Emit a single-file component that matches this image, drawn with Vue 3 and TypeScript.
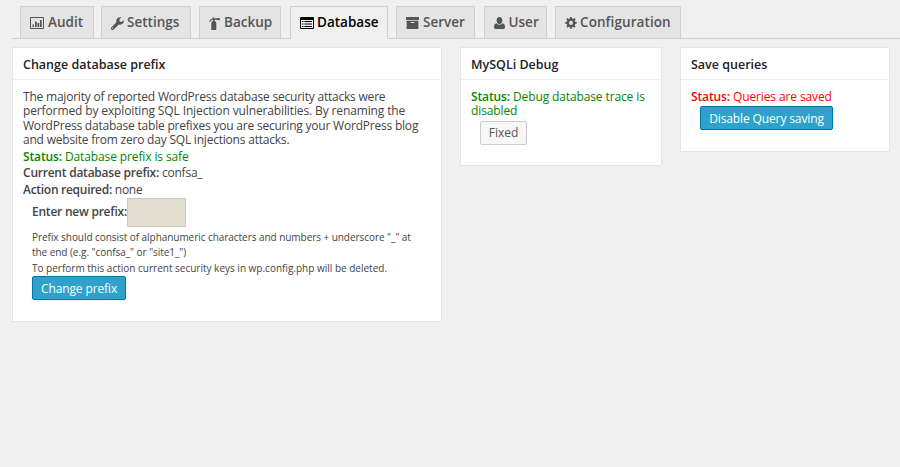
<script setup lang="ts">
interface Tab {
  id: string
  label: string
  box: string
  active?: boolean
}

const tabs: Tab[] = [
  { id: 'audit', label: 'Audit', box: '0 0 28 24' },
  { id: 'settings', label: 'Settings', box: '0.5 0.5 15 15' },
  { id: 'backup', label: 'Backup', box: '0 0 11 13' },
  { id: 'database', label: 'Database', box: '0 0 28 24', active: true },
  { id: 'server', label: 'Server', box: '0.5 1.5 15 13.5' },
  { id: 'user', label: 'User', box: '1 1.2 14 13.8' },
  { id: 'configuration', label: 'Configuration', box: '0 1 16 15.5' },
]
</script>

<template>
  <main class="page">
    <nav class="tabs">
      <a v-for="tab in tabs" :key="tab.id" class="tab" :class="[tab.id, { active: tab.active }]">
        <svg class="icon" :viewBox="tab.box" preserveAspectRatio="none" fill="currentColor">
          <template v-if="tab.id === 'audit'">
            <path fill-rule="evenodd" d="M2 0h24q2 0 2 2v20q0 2-2 2H2q-2 0-2-2V2Q0 0 2 0zm0 2v20h24V2z" />
            <path d="M5 15h3v5H5zM10 9h3.500v11H10zM15 12h3.500v8H15zM20 6h3.500v14H20z" />
          </template>
          <path v-else-if="tab.id === 'settings'" fill-rule="evenodd" d="M15.200 4.200 12.600 6.200 10.300 5.300V2.800L12.700 1C9.600.2 6.400 2 6.500 5.500L6.800 6.600 1 12.200c-.9.900-.9 1.900-.1 2.700s1.900.8 2.700-.1L9.400 9.200c3.700 1 6.500-1.500 5.800-5zM2.500 12.700a.7.700 0 1 1 0 1.400.7.700 0 0 1 0-1.400z" />
          <path v-else-if="tab.id === 'backup'" d="M3.500.8Q4.300-.2 5.300.8L5.600 1.600 10.800.9V3.300L5.600 2.700V3.800Q7.300 4.600 7.300 6.600V13H2.300V6.600Q2.300 4.600 4.200 3.800V2.700Q1.900 2.800 1 4.900L.1 4.500Q1.100 1.900 3.500 1.700z" />
          <path v-else-if="tab.id === 'database'" fill-rule="evenodd" d="M2 0h24q2 0 2 2v20q0 2-2 2H2q-2 0-2-2V2Q0 0 2 0zm0 6v16h24V6zM4 8h3v2H4zm5 0h15v2H9zM4 13h3v2H4zm5 0h15v2H9zM4 18h3v2H4zm5 0h15v2H9z" />
          <path v-else-if="tab.id === 'server'" fill-rule="evenodd" d="M.5 1.500h15v3.300H.5zM1.200 5.700h13.600V15H1.200zM6 7v1.200h4V7z" />
          <path v-else-if="tab.id === 'user'" d="M8 1.200c2.300 0 3.700 1.600 3.700 3.800 0 2.400-1.500 4.500-3.700 4.500S4.300 7.400 4.300 5c0-2.200 1.400-3.800 3.700-3.800zM4.200 8.400Q8 12 11.800 8.400C14.200 8.700 15 10.500 15 13q0 2-2 2H3q-2 0-2-2c0-2.500.8-4.300 3.200-4.600z" />
          <path v-else fill-rule="evenodd" d="M6.900 1h2.200l.4 2 1.400.6 1.700-1.200 1.600 1.600L13 5.700l.6 1.400 2 .4v2.200l-2 .4-.6 1.400 1.200 1.700-1.600 1.600-1.700-1.200-1.400.6-.4 2H6.900l-.4-2-1.400-.6-1.700 1.200-1.600-1.600L3 11.500l-.6-1.400-2-.4V7.500l2-.4L3 5.700 1.800 4l1.600-1.600 1.700 1.200L6.500 3zM8 6a2.600 2.600 0 1 0 0 5.200A2.600 2.600 0 0 0 8 6z" />
        </svg>
        <span>{{ tab.label }}</span>
      </a>
    </nav>

    <div class="cards">
      <section class="card prefix-card">
        <h2>Change database prefix</h2>
        <div class="body">
          <p class="intro">
            The majority of reported WordPress database security attacks were<br />
            <span class="wider">performed by exploiting SQL Injection vulnerabilities. By renaming the</span><br />
            WordPress database table prefixes you are securing your WordPress blog<br />
            and website from zero day SQL injections attacks.
          </p>
          <p class="row ok"><b>Status:</b> Database prefix is safe</p>
          <p class="row"><b>Current database prefix:</b> confsa_</p>
          <p class="row action"><b>Action required:</b> none</p>
          <form class="form" @submit.prevent>
            <label class="field"><b>Enter new prefix:</b><input type="text" /></label>
            <p class="hint">
              Prefix should consist of alphanumeric characters and numbers + underscore "_" at<br />
              the end (e.g. "confsa_" or "site1_")
            </p>
            <p class="hint note">To perform this action current security keys in wp.config.php will be deleted.</p>
            <button class="btn primary change">Change prefix</button>
          </form>
        </div>
      </section>

      <section class="card debug-card">
        <h2>MySQLi Debug</h2>
        <div class="body">
          <p class="ok"><b>Status:</b> Debug database trace is<br />disabled</p>
          <button class="btn fixed">Fixed</button>
        </div>
      </section>

      <section class="card queries-card">
        <h2>Save queries</h2>
        <div class="body">
          <p class="bad"><b>Status:</b> Queries are saved</p>
          <button class="btn primary disable">Disable Query saving</button>
        </div>
      </section>
    </div>
  </main>
</template>

<style>
body {
  background: #f0f0f0;
}
</style>

<style scoped>
.page {
  box-sizing: border-box;
  height: 467px;
  padding: 6px 0 0 12px;
  overflow: hidden;
  background: #f0f0f0;
  color: #444;
  font: 12px/14.4px "Open Sans", sans-serif;
  white-space: nowrap;
}
.tabs {
  display: flex;
  height: 33px;
  box-sizing: border-box;
  padding-left: 8px;
  border-bottom: 1px solid #d0d0d0;
}
.tab {
  display: flex;
  box-sizing: border-box;
  height: 32px;
  padding: 0 0 0 9px;
  gap: 4px;
  align-items: center;
  border: 1px solid #d0d0d0;
  border-bottom: 0;
  background: #e4e4e4;
  color: #555;
  font-size: 13.500px;
  font-weight: 600;
}
.tab.active {
  height: 33px;
  padding-bottom: 2px;
  background: #f0f0f0;
  color: #000;
}
.icon {
  width: 14px;
  height: 12px;
  flex: none;
  margin-top: 1px;
}
.audit { width: 74px; margin-right: 7px; }
.settings { width: 90px; margin-right: 8px; gap: 3px; }
.settings .icon { width: 13px; height: 13px; }
.backup { width: 82px; margin-right: 9px; }
.backup .icon { width: 11px; height: 13px; }
.database { width: 98px; margin-right: 8px; gap: 3px; }
.server { width: 79px; margin-right: 9px; }
.server .icon { width: 13px; }
.user { width: 63px; margin-right: 8px; gap: 3.500px; }
.user .icon { width: 11px; }
.configuration { width: 126px; letter-spacing: 0.08px; gap: 3px; }
.configuration .icon { width: 12px; }
.cards {
  display: flex;
  align-items: flex-start;
  gap: 18px;
  padding-top: 8px;
}
.card {
  box-sizing: border-box;
  border: 1px solid #e5e5e5;
  background: #fff;
}
.prefix-card { width: 430px; height: 275px; }
.debug-card { width: 202px; height: 119px; }
.queries-card { width: 210px; height: 105px; }
h2 {
  box-sizing: border-box;
  height: 32px;
  margin: 0;
  padding: 1px 0 0 10px;
  border-bottom: 1px solid #eee;
  color: #222;
  font-size: 12.500px;
  font-weight: 600;
  line-height: 31px;
}
.body {
  padding: 10px 10px 0;
}
p {
  margin: 0;
}
b {
  font-weight: 600;
}
.intro {
  padding-bottom: 1px;
  letter-spacing: -0.21px;
}
.wider {
  letter-spacing: -0.125px;
}
.row {
  line-height: 16.500px;
  letter-spacing: -0.23px;
}
.row.action {
  letter-spacing: -0.28px;
}
.ok { color: #008a00; letter-spacing: -0.12px; }
.row.ok { letter-spacing: -0.12px; }
.bad { color: #f00; letter-spacing: -0.12px; }
.form {
  padding-left: 9px;
}
.field {
  display: flex;
  height: 29px;
  line-height: 27px;
  letter-spacing: -0.23px;
}
input {
  box-sizing: border-box;
  width: 59px;
  height: 29px;
  padding: 0;
  border: 1px solid #cbc8bc;
  background: #e1ddd1;
}
.hint {
  padding-top: 3px;
  font-size: 10px;
  letter-spacing: -0.05px;
}
.note {
  padding: 2px 0 1px;
  letter-spacing: 0;
}
.btn {
  display: block;
  box-sizing: border-box;
  height: 24px;
  padding: 0;
  border: 1px solid #ccc;
  border-radius: 2px;
  background: #f7f7f7;
  color: #555;
  font: 12px/21px "Open Sans", sans-serif;
}
.primary {
  border-color: #0074a2;
  background: #2ea2cc;
  color: #fff;
  letter-spacing: -0.12px;
}
.change { width: 94px; }
.fixed { width: 47px; margin: 2px 0 0 9px; }
.disable { width: 133px; margin: 2px 0 0 9px; }
</style>
